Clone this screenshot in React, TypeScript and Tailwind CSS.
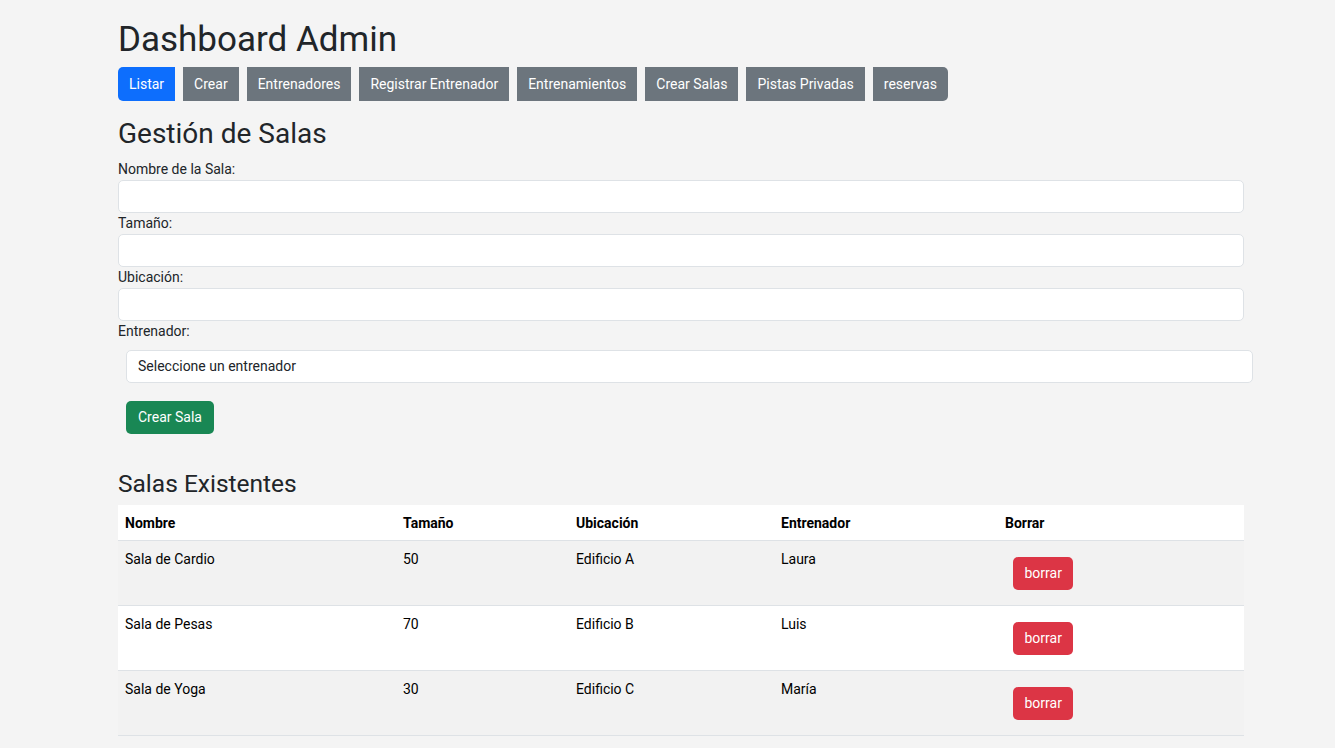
const navItems = [
  "Listar",
  "Crear",
  "Entrenadores",
  "Registrar Entrenador",
  "Entrenamientos",
  "Crear Salas",
  "Pistas Privadas",
  "reservas",
];

const salas = [
  { nombre: "Sala de Cardio", tamano: "50", ubicacion: "Edificio A", entrenador: "Laura" },
  { nombre: "Sala de Pesas", tamano: "70", ubicacion: "Edificio B", entrenador: "Luis" },
  { nombre: "Sala de Yoga", tamano: "30", ubicacion: "Edificio C", entrenador: "María" },
];

function NavButton({ label, index }: { label: string; index: number }) {
  const first = index === 0;
  const last = index === navItems.length - 1;
  return (
    <button
      className={
        "h-[34px] border border-transparent px-[10px] text-[14px] leading-[21px] text-white " +
        (first ? "rounded-l-[5px] bg-[#0d6efd] " : "bg-[#6c757d] ") +
        (last ? "rounded-r-[5px]" : "")
      }
    >
      {label}
    </button>
  );
}

function Field({ label }: { label: string }) {
  return (
    <div>
      <label className="block text-[14px] leading-[21px] text-[#212529]">{label}</label>
      <input className="block h-[33px] w-full rounded-[5px] border border-[#dee2e6] bg-white px-[10px] text-[14px]" />
    </div>
  );
}

export default function App() {
  return (
    <main
      className="min-h-screen bg-[#f4f4f4] text-[#212529]"
      style={{ fontFamily: "Roboto, 'Liberation Sans', sans-serif" }}
    >
      <div className="ml-[118px] w-[1126px] pt-[19px] pb-[10px]">
        <h1 className="text-[35px] leading-[42px] font-normal">Dashboard Admin</h1>
        <nav className="mt-[6px] flex gap-2">
          {navItems.map((item, i) => (
            <NavButton key={item} label={item} index={i} />
          ))}
        </nav>

        <h3 className="mt-[16px] text-[28px] leading-[34px] font-normal">Gestión de Salas</h3>
        <form className="mt-[8px]">
          <Field label="Nombre de la Sala:" />
          <Field label="Tamaño:" />
          <Field label="Ubicación:" />
          <label className="block text-[14px] leading-[21px]">Entrenador:</label>
          <select className="mt-[8px] ml-2 -mr-[9px] block h-[33px] w-[1127px] appearance-none rounded-[5px] border border-[#dee2e6] bg-white px-[11px] text-[14px] text-[#212529]">
            <option>Seleccione un entrenador</option>
          </select>
          <button
            type="button"
            className="mt-[18px] ml-2 h-[33px] rounded-[5px] bg-[#198754] px-[12px] text-[14px] text-white"
          >
            Crear Sala
          </button>
        </form>

        <h3 className="mt-[35px] text-[24.5px] leading-[29px] font-normal">Salas Existentes</h3>
        <table className="mt-[7px] w-full border-collapse text-left text-[14px] leading-[21px]">
          <thead>
            <tr className="border-b border-[#dee2e6] bg-white">
              <th className="w-[278px] px-[7px] pt-[8px] pb-[6px] font-bold text-black">Nombre</th>
              <th className="w-[173px] px-[7px] pt-[8px] pb-[6px] font-bold text-black">Tamaño</th>
              <th className="w-[205px] px-[7px] pt-[8px] pb-[6px] font-bold text-black">Ubicación</th>
              <th className="w-[224px] px-[7px] pt-[8px] pb-[6px] font-bold text-black">Entrenador</th>
              <th className="px-[7px] pt-[8px] pb-[6px] font-bold text-black">Borrar</th>
            </tr>
          </thead>
          <tbody>
            {salas.map((s, i) => (
              <tr
                key={s.nombre}
                className={"border-b border-[#dee2e6] " + (i % 2 === 0 ? "bg-[#f2f2f2]" : "bg-white")}
              >
                <td className="px-[7px] pt-[8px] pb-[7px] align-top text-black">{s.nombre}</td>
                <td className="px-[7px] pt-[8px] pb-[7px] align-top text-black">{s.tamano}</td>
                <td className="px-[7px] pt-[8px] pb-[7px] align-top text-black">{s.ubicacion}</td>
                <td className="px-[7px] pt-[8px] pb-[7px] align-top text-black">{s.entrenador}</td>
                <td className="px-[7px] py-[7px] align-top">
                  <button className="mt-[9px] mb-[8px] ml-2 h-[33px] rounded-[5px] bg-[#dc3545] px-[11.5px] text-[14px] text-white">
                    borrar
                  </button>
                </td>
              </tr>
            ))}
          </tbody>
        </table>
      </div>
    </main>
  );
}
